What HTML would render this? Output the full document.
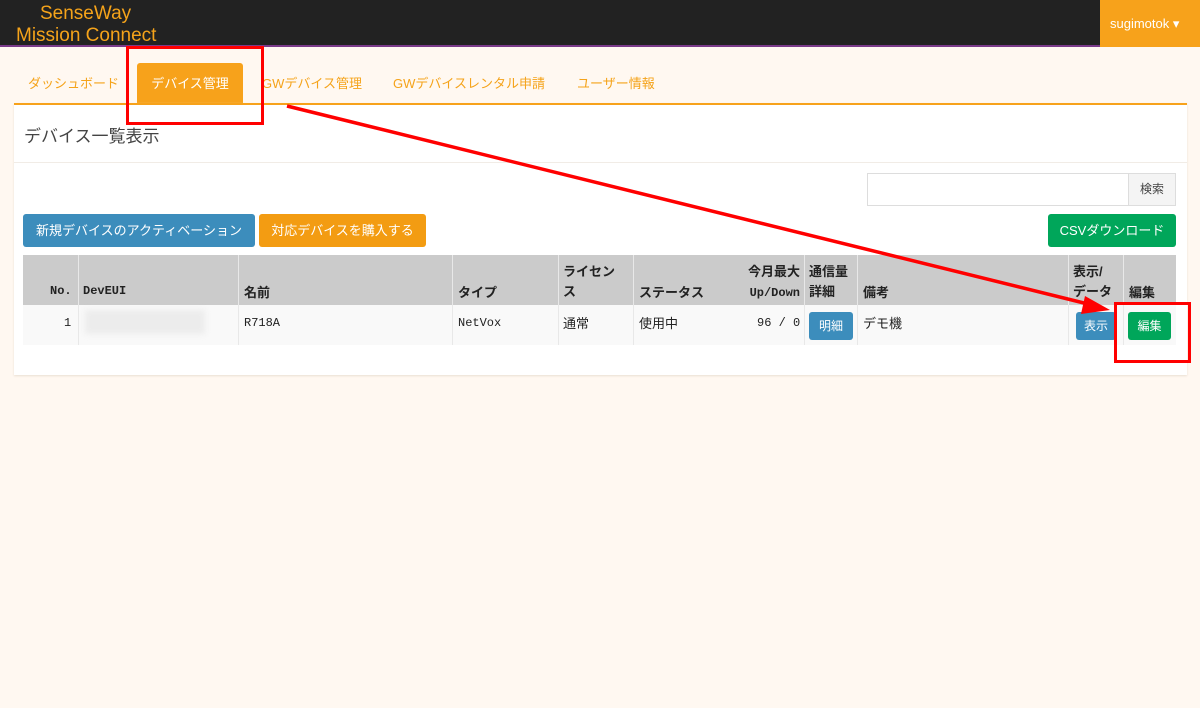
<!DOCTYPE html>
<html><head><meta charset="utf-8"><style>
*{box-sizing:border-box;margin:0;padding:0}
body{width:1200px;height:708px;background:#fff8f1;font-family:"Liberation Sans","Noto Sans CJK JP",sans-serif;position:relative;overflow:hidden;font-size:13px;color:#333}
.a{position:absolute}
.hdr{left:0;top:0;width:1200px;height:47px;background:#222;border-bottom:2px solid #7a3a8a}
.logo{color:#f5a31a;font-size:19px;line-height:21px;font-family:"Liberation Sans",sans-serif}
.user{left:1100px;top:0;width:100px;height:47px;background:#f7a21b;color:#fff;font-size:13px;line-height:47px;padding-left:10px}
.tab{top:63px;height:41px;line-height:41px;color:#f5a31a;font-size:13px}
.btn{color:#fff;font-size:13px;text-align:center;border-radius:3px}
.th,.td{position:absolute;font-size:13px;font-weight:bold;color:#222}
.mono{font-family:"Liberation Mono","Noto Sans CJK JP",monospace;font-size:12px}
.vl{position:absolute;top:255px;height:90px;width:1px;background:#e8e8e8}
</style></head><body>
<div class="a hdr"></div>
<div class="a logo" style="left:40px;top:3px">SenseWay</div>
<div class="a logo" style="left:16px;top:25px">Mission Connect</div>
<div class="a user">sugimotok ▾</div>

<div class="a tab" style="left:28px">ダッシュボード</div>
<div class="a tab" style="left:137px;width:106px;background:#f7a21b;color:#fff;text-align:center;border-radius:3px 3px 0 0">デバイス管理</div>
<div class="a tab" style="left:262px">GWデバイス管理</div>
<div class="a tab" style="left:393px">GWデバイスレンタル申請</div>
<div class="a tab" style="left:577px">ユーザー情報</div>

<div class="a" style="left:14px;top:103px;width:1173px;height:272px;background:#fff;border-top:2px solid #f7a21b;box-shadow:0 1px 2px #eadfd2"></div>
<div class="a" style="left:24px;top:122px;font-size:17px;color:#444">デバイス一覧表示</div>
<div class="a" style="left:14px;top:162px;width:1173px;height:1px;background:#f1ece6"></div>

<div class="a" style="left:867px;top:173px;width:262px;height:33px;border:1px solid #ddd"></div>
<div class="a" style="left:1128px;top:173px;width:48px;height:33px;border:1px solid #ddd;background:#f4f4f4;text-align:center;line-height:31px;font-size:12px;color:#444">検索</div>

<div class="a btn" style="left:23px;top:214px;width:232px;height:33px;line-height:33px;background:#3c8dbc">新規デバイスのアクティベーション</div>
<div class="a btn" style="left:259px;top:214px;width:167px;height:33px;line-height:33px;background:#f39c12">対応デバイスを購入する</div>
<div class="a btn" style="left:1048px;top:214px;width:128px;height:33px;line-height:33px;background:#00a65a">CSVダウンロード</div>

<div class="a" style="left:23px;top:255px;width:1153px;height:50px;background:#cbcbcb"></div>
<div class="a" style="left:23px;top:305px;width:1153px;height:40px;background:#f9f9f9"></div>
<div class="vl" style="left:78px"></div><div class="vl" style="left:238px"></div><div class="vl" style="left:452px"></div><div class="vl" style="left:558px"></div><div class="vl" style="left:633px"></div><div class="vl" style="left:804px"></div><div class="vl" style="left:857px"></div><div class="vl" style="left:1068px"></div><div class="vl" style="left:1123px"></div>

<div class="th mono" style="left:50px;top:284px">No.</div>
<div class="th mono" style="left:83px;top:284px">DevEUI</div>
<div class="th" style="left:244px;top:282px">名前</div>
<div class="th" style="left:458px;top:282px">タイプ</div>
<div class="th" style="left:563px;top:262px;line-height:20px">ライセン<br>ス</div>
<div class="th" style="left:639px;top:282px">ステータス</div>
<div class="th" style="left:738px;top:262px;text-align:right;width:62px;line-height:20px">今月最大<br><span class="mono">Up/Down</span></div>
<div class="th" style="left:809px;top:262px;line-height:20px">通信量<br>詳細</div>
<div class="th" style="left:863px;top:282px">備考</div>
<div class="th" style="left:1073px;top:262px;line-height:20px">表示/<br>データ</div>
<div class="th" style="left:1129px;top:282px">編集</div>

<div class="td mono" style="left:64px;top:316px;font-weight:normal">1</div>
<div class="a" style="left:85px;top:310px;width:120px;height:24px;background:#ececec;filter:blur(3px)"></div>
<div class="td mono" style="left:244px;top:316px;font-weight:normal">R718A</div>
<div class="td mono" style="left:458px;top:316px;font-weight:normal">NetVox</div>
<div class="td" style="left:563px;top:313px;font-weight:normal">通常</div>
<div class="td" style="left:639px;top:313px;font-weight:normal">使用中</div>
<div class="td mono" style="left:757px;top:316px;font-weight:normal">96 / 0</div>
<div class="a btn" style="left:809px;top:312px;width:44px;height:28px;line-height:28px;font-size:12px;background:#3c8dbc">明細</div>
<div class="td" style="left:863px;top:313px;font-weight:normal">デモ機</div>
<div class="a btn" style="left:1076px;top:312px;width:40px;height:28px;line-height:28px;font-size:12px;background:#3c8dbc">表示</div>
<div class="a btn" style="left:1128px;top:312px;width:43px;height:28px;line-height:28px;font-size:12px;background:#00a65a">編集</div>

<div class="a" style="left:126px;top:46px;width:138px;height:79px;border:3px solid #f00"></div>
<div class="a" style="left:1114px;top:302px;width:77px;height:61px;border:3px solid #f00"></div>
<svg class="a" style="left:0;top:0" width="1200" height="708"><line x1="287" y1="106" x2="1092" y2="305" stroke="#f00" stroke-width="3.5"/><polygon points="1110,310 1085,296 1081,314" fill="#f00"/></svg>
</body></html>
